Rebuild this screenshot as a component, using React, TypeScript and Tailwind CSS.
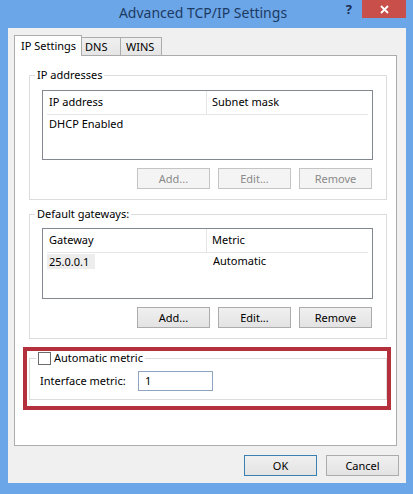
import React from 'react';

const font = "font-['Noto_Sans','Open_Sans',sans-serif]";

function DlgButton({ label, disabled = false, isDefault = false }: { label: string; disabled?: boolean; isDefault?: boolean }) {
  const cls = disabled
    ? 'border-[#c4c4c4] bg-[#f4f4f4] text-[#8a8a8a]'
    : isDefault
      ? 'border-[#3c7fb1] bg-gradient-to-b from-[#f0f0f0] to-[#e3e3e3] text-black'
      : 'border-[#acacac] bg-gradient-to-b from-[#f0f0f0] to-[#e3e3e3] text-black';
  return (
    <div className={`w-[73px] h-[21px] border flex items-center justify-center text-[11px] leading-none ${cls}`}>
      {label}
    </div>
  );
}

function ListBox({ cols, row, selected = false, tall = false }: { cols: [string, string]; row: [string, string]; selected?: boolean; tall?: boolean }) {
  return (
    <div className={`ml-[12px] w-[331px] ${tall ? 'h-[71px]' : 'h-[70px]'} border border-[#828790] bg-white`}>
      <div className="mx-[4px] h-[24px] flex border-b border-[#e5e5e5] text-[11px] text-black">
        <div className="w-[160px] border-r border-[#e5e5e5] pl-[2px] flex items-center">{cols[0]}</div>
        <div className="pl-[5px] flex items-center">{cols[1]}</div>
      </div>
      <div className="mx-[4px] mt-[1px] h-[15px] flex text-[11px] text-black">
        <div className="w-[161px] flex items-center">
          <span className={`px-[2px] leading-[15px] ${selected ? 'bg-[#ededed] pr-[6px]' : ''}`}>{row[0]}</span>
        </div>
        <div className="pl-[5px] flex items-center">{row[1]}</div>
      </div>
    </div>
  );
}

function ButtonRow({ disabled = false }: { disabled?: boolean }) {
  return (
    <div className="ml-[12px] w-[331px] pr-[1px] mt-[8px] flex justify-end gap-[8px]">
      <DlgButton label="Add..." disabled={disabled} />
      <DlgButton label="Edit..." disabled={disabled} />
      <DlgButton label="Remove" disabled={disabled} />
    </div>
  );
}

export default function App() {
  return (
    <div className={`w-[413px] h-[494px] bg-[#6ba6e8] flex flex-col ${font}`}>
      {/* title bar */}
      <div className="h-[28px] grid grid-cols-[1fr_auto_1fr] pr-[7px]">
        <div />
        <div className="text-[14px] leading-[26px] text-[#1d3a63]">Advanced TCP/IP Settings</div>
        <div className="flex justify-end items-start">
          <div className="mr-[10px] mt-[1px] text-[13px] font-bold leading-[16px] text-[#1b2d52]">?</div>
          <div className="w-[44px] h-[18px] bg-[#c9504a] flex items-center justify-center">
            <svg width="9" height="9" viewBox="0 0 9 9">
              <path d="M1 1L8 8M8 1L1 8" stroke="white" strokeWidth="1.8" />
            </svg>
          </div>
        </div>
      </div>

      {/* client area */}
      <div className="ml-[8px] mr-[7px] h-[455px] bg-[#f0f0f0] pt-[7px] text-[11px] text-black">
        {/* tabs */}
        <div className="ml-[6px] flex items-end">
          <div className="relative z-10 -mb-px w-[68px] h-[21px] bg-white border border-b-0 border-[#acacac] pl-[6px] leading-[19px]">
            IP Settings
          </div>
          <div className="w-[39px] h-[18px] bg-gradient-to-b from-[#f0f0f0] to-[#e5e5e5] border border-l-0 border-b-0 border-[#acacac] pl-[3px] leading-[17px]">
            DNS
          </div>
          <div className="w-[41px] h-[18px] bg-gradient-to-b from-[#f0f0f0] to-[#e5e5e5] border border-l-0 border-b-0 border-[#acacac] pl-[5px] leading-[17px]">
            WINS
          </div>
        </div>

        {/* tab panel */}
        <div className="ml-[6px] w-[383px] h-[391px] border border-[#acacac] bg-white px-[14px]">
          <fieldset className="mt-[11px] w-[358px] border border-[#dcdcdc] pb-[10px]">
            <legend className="ml-[5px] px-[2px] leading-[16px]">IP addresses</legend>
            <div className="mt-[7px]">
              <ListBox cols={['IP address', 'Subnet mask']} row={['DHCP Enabled', '']} />
            </div>
            <ButtonRow disabled />
          </fieldset>

          <fieldset className="mt-[6px] w-[358px] border border-[#dcdcdc] pb-[10px]">
            <legend className="ml-[5px] px-[2px] leading-[16px]">Default gateways:</legend>
            <div className="mt-[6px]">
              <ListBox cols={['Gateway', 'Metric']} row={['25.0.0.1', 'Automatic']} selected tall />
            </div>
            <ButtonRow />
          </fieldset>

          {/* highlighted section */}
          <div className="mt-[8px] -ml-[6px] w-[368px] border-4 border-[#b3303c] pl-[2px] pb-[6px]">
            <fieldset className="w-[358px] border border-[#dcdcdc] pb-[8px]">
              <legend className="ml-[6px] px-[2px] h-[14px] flex items-center gap-[3px] leading-[14px]">
                <span className="w-[13px] h-[13px] border border-[#6b6b6b] bg-white inline-block" />
                <span>Automatic metric</span>
              </legend>
              <div className="mt-[6px] flex items-center pl-[10px]">
                <div className="w-[98px]">Interface metric:</div>
                <div className="w-[75px] h-[20px] border border-[#8ea4c0] bg-white pl-[6px] leading-[18px]">1</div>
              </div>
            </fieldset>
          </div>
        </div>

        {/* dialog buttons */}
        <div className="mt-[9px] pr-[7px] flex justify-end gap-[9px]">
          <DlgButton label="OK" isDefault />
          <DlgButton label="Cancel" />
        </div>
      </div>
    </div>
  );
}
